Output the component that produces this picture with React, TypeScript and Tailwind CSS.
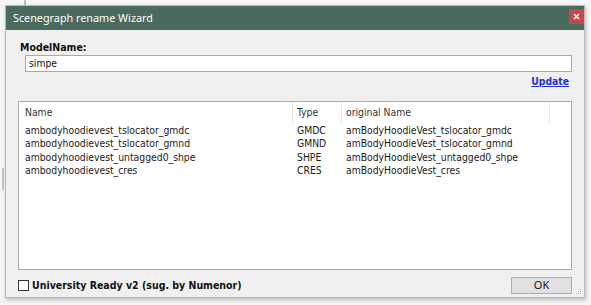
import React from "react";

const rows = [
  ["ambodyhoodievest_tslocator_gmdc", "GMDC", "amBodyHoodieVest_tslocator_gmdc"],
  ["ambodyhoodievest_tslocator_gmnd", "GMND", "amBodyHoodieVest_tslocator_gmnd"],
  ["ambodyhoodievest_untagged0_shpe", "SHPE", "amBodyHoodieVest_untagged0_shpe"],
  ["ambodyhoodievest_cres", "CRES", "amBodyHoodieVest_cres"],
];

export default function App() {
  const ui = { fontFamily: '"DejaVu Sans Condensed", "DejaVu Sans", sans-serif' };
  return (
    <div className="w-[591px] h-[305px] bg-[#f6f6f6] relative overflow-hidden">
      <div className="absolute left-[24px] top-0 w-[2px] h-[6px] bg-[#bdbdbd]" />
      <div className="absolute left-[2px] top-[168px] w-[2px] h-[22px] bg-[#c8c8c8]" />
      <div className="absolute left-[5px] top-[5px] w-[580px] h-[293px] flex flex-col bg-[#f0f0f0] border border-[#b9b9b9] shadow-[1px_2px_4px_rgba(0,0,0,0.25)]">
        <div className="h-[24px] shrink-0 bg-[#4a6a5e] flex items-center justify-between relative">
          <span
            className="pl-[7px] text-white text-[10.8px]"
            style={{ fontFamily: '"Noto Sans", "Open Sans", sans-serif' }}
          >
            Scenegraph rename Wizard
          </span>
          <div className="w-[15px] h-[15px] bg-[#c9474b] mt-[-3px] flex items-center justify-center">
            <svg width="7" height="7" viewBox="0 0 7 7">
              <path d="M1 1 L6 6 M6 1 L1 6" stroke="#fff" strokeWidth="1.6" />
            </svg>
          </div>
        </div>
        <div className="flex-1 flex flex-col px-[12px] pt-[11px]" style={ui}>
          <div className="text-[10.5px] font-bold text-[#111] leading-[12px] pl-[2px] h-[12px]">
            ModelName:
          </div>
          <div className="ml-[7px] mt-[2px] h-[17px] shrink-0 bg-white border border-[#a9a9a9] flex items-center px-[3px] text-[10.3px] text-[#111]">
            simpe
          </div>
          <div className="flex justify-end mt-[2px] h-[14px] pr-[3px]">
            <span className="text-[10.3px] font-bold text-[#1a33d1] underline leading-[14px]">
              Update
            </span>
          </div>
          <div className="mt-[13px] h-[169px] shrink-0 bg-white border border-[#a9a9a9] text-[10.3px] text-[#1a1a1a]">
            <div className="flex h-[22px] items-center text-[#333]">
              <div className="w-[274px] pl-[6px] h-full flex items-center border-r border-[#e8e8e8]">Name</div>
              <div className="w-[49px] pl-[4px] h-full flex items-center border-r border-[#e8e8e8]">Type</div>
              <div className="w-[208px] pl-[4px] h-full flex items-center border-r border-[#e8e8e8]">original Name</div>
            </div>
            <div>
              {rows.map((r) => (
                <div key={r[0]} className="flex h-[13.3px] items-center">
                  <div className="w-[274px] pl-[6px]">{r[0]}</div>
                  <div className="w-[49px] pl-[4px]">{r[1]}</div>
                  <div className="w-[208px] pl-[4px]">{r[2]}</div>
                </div>
              ))}
            </div>
          </div>
          <div className="flex items-center justify-between mt-[7px]">
            <div className="flex items-center">
              <div className="w-[11px] h-[11px] bg-white border border-[#333]" />
              <span className="ml-[3px] text-[10.5px] font-bold text-[#111]">
                University Ready v2 (sug. by Numenor)
              </span>
            </div>
            <div
              className="w-[61px] h-[17px] bg-[#e1e1e1] border border-[#adadad] flex items-center justify-center text-[11px] text-[#111]"
              style={{ fontFamily: '"Noto Sans", sans-serif' }}
            >
              OK
            </div>
          </div>
        </div>
        <svg className="absolute right-[2px] bottom-[2px]" width="6" height="6" viewBox="0 0 6 6">
          <rect x="4" y="0" width="1" height="1" fill="#aaa" />
          <rect x="2" y="2" width="1" height="1" fill="#aaa" />
          <rect x="4" y="2" width="1" height="1" fill="#aaa" />
          <rect x="0" y="4" width="1" height="1" fill="#aaa" />
          <rect x="2" y="4" width="1" height="1" fill="#aaa" />
          <rect x="4" y="4" width="1" height="1" fill="#aaa" />
        </svg>
      </div>
    </div>
  );
}
